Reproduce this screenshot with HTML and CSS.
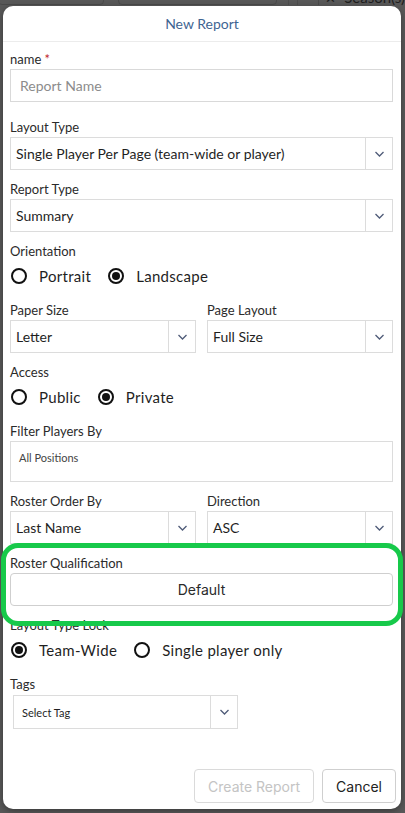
FILE: index.html
```html
<!doctype html>
<html lang="en">
<head>
  <meta charset="UTF-8">
  <meta name="viewport" content="width=device-width, initial-scale=1.0">
  <title>New Report</title>
  <link rel="stylesheet" href="styles.css">
</head>
<body>
  <!-- page toolbar behind the dimmed overlay -->
  <div class="backdrop">
    <div class="bd-box bd-box-a"></div>
    <div class="bd-box bd-box-b"></div>
    <div class="bd-sep"></div>
    <div class="bd-chip"><span class="bd-x">&#x2715;</span> Season(s)</div>
  </div>

  <div class="modal">
    <div class="modal-header">New Report</div>

    <div class="modal-body">
      <div class="field field-first">
        <label class="field-label">name <span class="req">*</span></label>
        <input class="text-input" type="text" placeholder="Report Name">
      </div>

      <div class="field">
        <label class="field-label">Layout Type</label>
        <div class="select">
          <span class="select-value">Single Player Per Page (team-wide or player)</span>
          <span class="select-caret"><svg viewBox="0 0 10 6"><path d="M1 1l4 4 4-4"/></svg></span>
        </div>
      </div>

      <div class="field">
        <label class="field-label">Report Type</label>
        <div class="select">
          <span class="select-value">Summary</span>
          <span class="select-caret"><svg viewBox="0 0 10 6"><path d="M1 1l4 4 4-4"/></svg></span>
        </div>
      </div>

      <div class="field">
        <label class="field-label">Orientation</label>
        <div class="radio-row">
          <span class="radio"><span class="dot"></span>Portrait</span>
          <span class="radio checked"><span class="dot"></span>Landscape</span>
        </div>
      </div>

      <div class="field-pair">
        <div class="field">
          <label class="field-label">Paper Size</label>
          <div class="select">
            <span class="select-value">Letter</span>
            <span class="select-caret"><svg viewBox="0 0 10 6"><path d="M1 1l4 4 4-4"/></svg></span>
          </div>
        </div>
        <div class="field">
          <label class="field-label">Page Layout</label>
          <div class="select">
            <span class="select-value">Full Size</span>
            <span class="select-caret"><svg viewBox="0 0 10 6"><path d="M1 1l4 4 4-4"/></svg></span>
          </div>
        </div>
      </div>

      <div class="field">
        <label class="field-label">Access</label>
        <div class="radio-row">
          <span class="radio"><span class="dot"></span>Public</span>
          <span class="radio checked"><span class="dot"></span>Private</span>
        </div>
      </div>

      <div class="field">
        <label class="field-label">Filter Players By</label>
        <div class="multi">All Positions</div>
      </div>

      <div class="field-pair">
        <div class="field">
          <label class="field-label">Roster Order By</label>
          <div class="select">
            <span class="select-value">Last Name</span>
            <span class="select-caret"><svg viewBox="0 0 10 6"><path d="M1 1l4 4 4-4"/></svg></span>
          </div>
        </div>
        <div class="field">
          <label class="field-label">Direction</label>
          <div class="select">
            <span class="select-value">ASC</span>
            <span class="select-caret"><svg viewBox="0 0 10 6"><path d="M1 1l4 4 4-4"/></svg></span>
          </div>
        </div>
      </div>

      <div class="field">
        <label class="field-label">Roster Qualification</label>
        <button class="btn-block" type="button">Default</button>
      </div>

      <div class="field">
        <label class="field-label">Layout Type Lock</label>
        <div class="radio-row">
          <span class="radio checked"><span class="dot"></span>Team-Wide</span>
          <span class="radio"><span class="dot"></span>Single player only</span>
        </div>
      </div>

      <div class="field">
        <label class="field-label">Tags</label>
        <div class="select select-tags">
          <span class="select-value">Select Tag</span>
          <span class="select-caret"><svg viewBox="0 0 10 6"><path d="M1 1l4 4 4-4"/></svg></span>
        </div>
      </div>

      <!-- highlight ring around the qualification field -->
      <div class="highlight"></div>
    </div>

    <div class="modal-footer">
      <button class="btn" type="button" disabled>Create Report</button>
      <button class="btn" type="button">Cancel</button>
    </div>
  </div>
</body>
</html>
```

FILE: styles.css
```css
* {
  margin: 0;
  padding: 0;
  box-sizing: border-box;
}
body {
  background: #585858;
  font-family: 'Lato', 'Liberation Sans', sans-serif;
  color: #333;
  height: 813px;
  overflow: hidden;
  position: relative;
  padding-top: 6px;
}

/* dimmed page behind the modal */
.backdrop {
  position: absolute;
  top: -18px;
  left: 0;
  width: 100%;
  height: 23px;
  display: flex;
  align-items: flex-end;
}
.bd-box {
  height: 23px;
  border: 1px solid #4a4a4a;
  border-radius: 4px;
}
.bd-box-a { width: 107px; margin-left: -2px; }
.bd-box-b { width: 160px; margin-left: 14px; }
.bd-sep {
  width: 10px;
  height: 23px;
  margin-left: 11px;
  border-left: 1px solid #4d4d4d;
  border-right: 1px solid #4d4d4d;
}
.bd-chip {
  margin-left: 20px;
  height: 23px;
  padding-left: 6px;
  border-left: 1px solid #4a4a4a;
  font-family: 'Lato', sans-serif;
  font-size: 15px;
  color: #1e1e1e;
  line-height: 30px;
  white-space: nowrap;
}
.bd-x { font-size: 13px; margin-right: 4px; }

.modal {
  position: relative;
  margin-left: 3px;
  width: 398px;
  height: 803px;
  background: #fff;
  border-radius: 10px;
  box-shadow: 0 2px 6px rgba(0,0,0,0.35);
  display: flex;
  flex-direction: column;
}
.modal-header {
  height: 36px;
  border-bottom: 1px solid #ececec;
  text-align: center;
  line-height: 36px;
  font-size: 14px;
  color: #3f6592;
}
.modal-body {
  position: relative;
  flex: 1;
  padding: 8px 8px 0 7px;
}

.field {
  margin-bottom: 10px;
}
.field-first {
  margin-bottom: 16px;
}
.field-label {
  display: block;
  font-size: 13px;
  line-height: 18px;
  margin-bottom: 1px;
  color: #2b2b2b;
}
.req { color: #c0262b; }

.text-input {
  display: block;
  width: 100%;
  height: 33px;
  border: 1px solid #d9d9d9;
  padding: 0 9px;
  font-family: inherit;
  font-size: 14px;
  color: #333;
  outline: none;
}
.text-input::placeholder { color: #8c8c8c; }

.select {
  display: flex;
  height: 33px;
  border: 1px solid #dcdcdc;
}
.select-value {
  flex: 1;
  display: flex;
  align-items: center;
  padding-left: 5px;
  font-size: 14px;
  color: #1f1f1f;
  white-space: nowrap;
  overflow: hidden;
}
.select-caret {
  width: 27px;
  border-left: 1px solid #dcdcdc;
  display: flex;
  align-items: center;
  justify-content: center;
}
.select-caret svg {
  width: 11px;
  height: 6px;
  fill: none;
  stroke: #4f5b78;
  stroke-width: 1.3;
}
.select-tags {
  width: 225px;
  height: 34px;
  margin: 2px 0 0 3px;
}
.select-tags .select-value {
  font-size: 11px;
  padding-left: 8px;
}

.field-pair {
  display: grid;
  grid-template-columns: 1fr 1fr;
  column-gap: 11px;
}

.radio-row {
  display: flex;
  align-items: center;
  height: 30px;
  gap: 17px;
  padding-left: 1px;
}
.radio {
  display: flex;
  align-items: center;
  gap: 12px;
  font-size: 15px;
  color: #1f1f1f;
  letter-spacing: 0.3px;
}
.dot {
  width: 16px;
  height: 16px;
  border: 2px solid #111;
  border-radius: 50%;
  display: flex;
  align-items: center;
  justify-content: center;
}
.radio.checked .dot::after {
  content: '';
  width: 8px;
  height: 8px;
  border-radius: 50%;
  background: #111;
}

.multi {
  height: 41px;
  border: 1px solid #dcdcdc;
  padding: 9px 8px;
  font-size: 11px;
  color: #444;
}

.btn-block {
  display: block;
  width: 100%;
  height: 33px;
  background: #fff;
  border: 1px solid #cfcfcf;
  border-radius: 4px;
  font-family: 'Inter', sans-serif;
  font-size: 14px;
  color: #2a2a2a;
}

.highlight {
  position: absolute;
  top: 501px;
  left: -2px;
  right: -2px;
  height: 83px;
  border: 5px solid #17c94a;
  border-radius: 17px;
  pointer-events: none;
}

.modal-footer {
  display: flex;
  justify-content: flex-end;
  gap: 8px;
  padding: 0 5px 6px 0;
}
.btn {
  height: 34px;
  padding: 0 13px;
  background: #fff;
  border: 1px solid #cfcfcf;
  border-radius: 4px;
  font-family: 'Inter', sans-serif;
  font-size: 14px;
  color: #222;
}
.btn:disabled {
  color: #c4c4c4;
  border-color: #dadada;
}
```
